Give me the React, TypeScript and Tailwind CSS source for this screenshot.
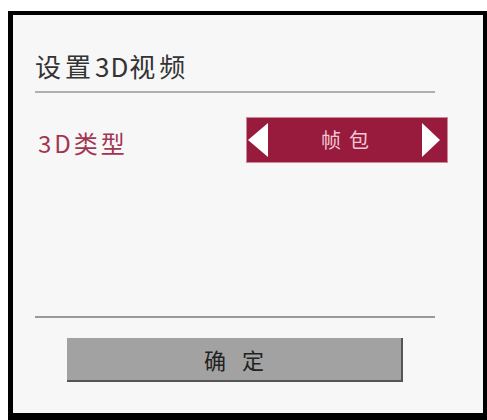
const Arrow = ({ dir }: { dir: "left" | "right" }) => (
  <svg width="20" height="34" viewBox="0 0 20 34" className="shrink-0">
    {dir === "left" ? (
      <polygon points="20,0 20,34 0,17" fill="#ffffff" />
    ) : (
      <polygon points="0,0 0,34 18,17" fill="#ffffff" />
    )}
  </svg>
);

const App = () => {
  return (
    <div
      className="w-[487px] h-[420px] bg-white overflow-hidden"
      style={{ fontFamily: '"Noto Sans CJK SC", "Noto Sans", sans-serif' }}
    >
      <div className="ml-[8px] mt-[11px] w-[482px] h-[409px] border-l-[5px] border-t-[4px] border-r-[7px] border-b-[7px] border-black bg-[#f7f7f7] pl-[22px] pt-[34px]">
        <div className="w-[400px]">
          <div className="text-[26px] leading-[33px] tracking-[4px] text-[#333333]">
            设置<span className="tracking-[1px]">3D</span>视频
          </div>
          <div className="mt-[9px] h-[2px] bg-[#b0b0b0]" />

          <div className="mt-[25px] flex w-[412px] items-center justify-between">
            <span className="pl-[3px] pt-[6px] text-[24px] leading-[30px] tracking-[3px] text-[#a23552]">3D类型</span>
            <div className="flex h-[44px] w-[200px] items-center justify-between bg-[#981a3d] pl-[1px] pr-[5px] shadow-[0_0_0_1px_#c98a9c]">
              <Arrow dir="left" />
              <span className="text-[20px] leading-[28px] tracking-[8px] pl-[8px] text-[#f4c8d4]">帧包</span>
              <Arrow dir="right" />
            </div>
          </div>

          <div className="mt-[154px] h-[2px] bg-[#9a9a9a]" />

          <div className="mx-auto mt-[20px] flex h-[44px] w-[336px] items-center justify-center border-r-2 border-b-2 border-[#555555] bg-[#a2a2a2]">
            <span className="text-[22px] leading-[30px] tracking-[16px] pl-[16px] text-[#222222]">确定</span>
          </div>
        </div>
      </div>
    </div>
  );
};

export default App;
